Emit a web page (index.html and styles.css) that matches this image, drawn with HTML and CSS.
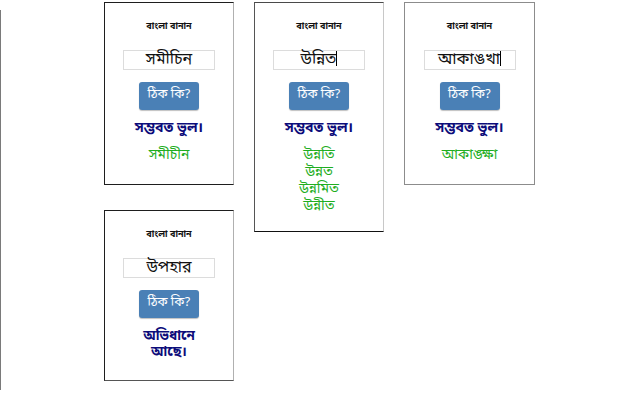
FILE: index.html
```html
<!DOCTYPE html>
<html lang="bn">
<head>
<meta charset="utf-8">
<title>বাংলা বানান</title>
<link rel="stylesheet" href="styles.css">
</head>
<body>
<div class="canvas">
  <div class="edge"></div>
  <div class="col col-first">
    <div class="panel p1">
      <div class="title">বাংলা বানান</div>
      <div class="field">সমীচিন</div>
      <div class="btn">ঠিক কি?</div>
      <div class="status">সম্ভবত ভুল।</div>
      <div class="sugg"><div class="word">সমীচীন</div></div>
    </div>
    <div class="panel p4">
      <div class="title">বাংলা বানান</div>
      <div class="field">উপহার</div>
      <div class="btn">ঠিক কি?</div>
      <div class="status"><div class="line">অভিধানে</div><div class="line">আছে।</div></div>
    </div>
  </div>
  <div class="col">
    <div class="panel p2">
      <div class="title">বাংলা বানান</div>
      <div class="field">উন্নিত<span class="caret"></span></div>
      <div class="btn">ঠিক কি?</div>
      <div class="status">সম্ভবত ভুল।</div>
      <div class="sugg">
        <div class="word">উন্নতি</div>
        <div class="word">উন্নত</div>
        <div class="word">উন্নমিত</div>
        <div class="word">উন্নীত</div>
      </div>
    </div>
  </div>
  <div class="col">
    <div class="panel p3">
      <div class="title">বাংলা বানান</div>
      <div class="field">আকাঙখা<span class="caret"></span></div>
      <div class="btn">ঠিক কি?</div>
      <div class="status">সম্ভবত ভুল।</div>
      <div class="sugg"><div class="word">আকাঙ্ক্ষা</div></div>
    </div>
  </div>
</div>
</body>
</html>
```

FILE: styles.css
```css
html, body {
  margin: 0;
  padding: 0;
  background: #fff;
}
body {
  width: 640px;
  height: 400px;
  overflow: hidden;
  font-family: "Noto Sans Bengali", "Vrinda", "Noto Sans", "DejaVu Sans", sans-serif;
}
.canvas {
  display: flex;
  align-items: flex-start;
  padding-top: 2px;
}
.edge {
  width: 1px;
  height: 380px;
  margin-top: 8px;
  margin-right: 103px;
  background: #7a7a7a;
}
.col {
  display: flex;
  flex-direction: column;
  margin-right: 20px;
}
.col-first {
  gap: 25px;
}
.panel {
  box-sizing: border-box;
  width: 130px;
  display: flex;
  flex-direction: column;
  align-items: center;
  background: #fff;
  border: 1px solid #1e1e1e;
  border-right-color: #b0b0b0;
}
.p1 { height: 183px; }
.p2 {
  height: 230px;
  border-color: #4a4a4a #c8c8c8 #111 #555;
}
.p3 {
  width: 131px;
  height: 183px;
  border-color: #8c8c8c;
}
.p4 {
  height: 171px;
  border-bottom-color: #555;
}
.title {
  margin-top: 18px;
  height: 12px;
  line-height: 12px;
  font-size: 9px;
  font-weight: bold;
  color: #111;
}
.field {
  box-sizing: border-box;
  margin-top: 17px;
  width: 92px;
  height: 20px;
  line-height: 18px;
  border: 1px solid #dcdcdc;
  text-align: center;
  font-size: 16px;
  color: #111;
}
.caret {
  display: inline-block;
  width: 1px;
  height: 15px;
  background: #000;
  vertical-align: -2px;
}
.btn {
  box-sizing: border-box;
  margin-top: 12px;
  width: 60px;
  height: 28px;
  line-height: 27px;
  border-radius: 3px;
  background: #4a80b6;
  box-shadow: 0 1px 1px rgba(0,0,0,0.25);
  color: #fff;
  font-size: 12.5px;
  text-align: center;
}
.status {
  margin-top: 11px;
  line-height: 16px;
  font-size: 14px;
  font-weight: bold;
  color: #0c0c7a;
  text-align: center;
}
.p4 .status {
  font-size: 13.5px;
}
.p4 .line {
  height: 16px;
}
.sugg {
  margin-top: 10px;
  display: flex;
  flex-direction: column;
  align-items: center;
  color: #1fae1f;
}
.word {
  height: 17px;
  line-height: 17px;
  font-size: 14px;
}
```
